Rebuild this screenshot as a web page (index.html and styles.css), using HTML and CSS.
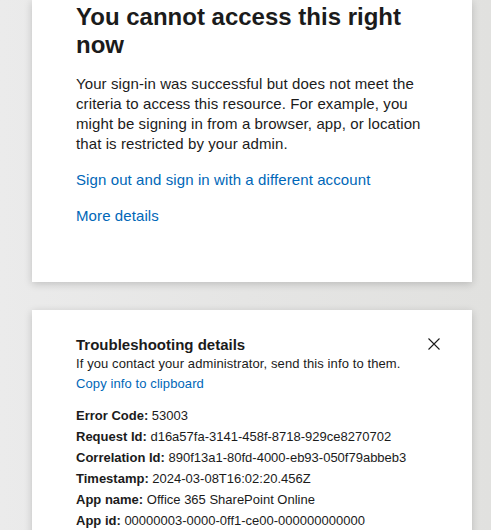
FILE: index.html
```html
<!DOCTYPE html>
<html lang="en">
<head>
<meta charset="utf-8">
<title>You cannot access this right now</title>
<link rel="stylesheet" href="styles.css">
</head>
<body>
<main class="page">
  <section class="card card-main">
    <h1 class="title">You cannot access this right now</h1>
    <p class="desc">Your sign-in was successful but does not meet the criteria to access this resource. For example, you might be signing in from a browser, app, or location that is restricted by your admin.</p>
    <a class="link link-signout" href="#">Sign out and sign in with a different account</a>
    <a class="link link-more" href="#">More details</a>
  </section>
  <section class="card card-details">
    <div class="details-head">
      <h2 class="details-title">Troubleshooting details</h2>
      <button class="close" aria-label="Close">
        <svg width="12" height="12" viewBox="0 0 12 12"><path d="M0.5 0.5 L11.5 11.5 M11.5 0.5 L0.5 11.5" stroke="#1b1b1b" stroke-width="1.1" fill="none"/></svg>
      </button>
    </div>
    <p class="details-sub">If you contact your administrator, send this info to them.</p>
    <a class="link link-copy" href="#">Copy info to clipboard</a>
    <dl class="info">
      <div class="row"><dt>Error Code:</dt> <dd>53003</dd></div>
      <div class="row"><dt>Request Id:</dt> <dd>d16a57fa-3141-458f-8718-929ce8270702</dd></div>
      <div class="row"><dt>Correlation Id:</dt> <dd>890f13a1-80fd-4000-eb93-050f79abbeb3</dd></div>
      <div class="row"><dt>Timestamp:</dt> <dd>2024-03-08T16:02:20.456Z</dd></div>
      <div class="row"><dt>App name:</dt> <dd>Office 365 SharePoint Online</dd></div>
      <div class="row"><dt>App id:</dt> <dd>00000003-0000-0ff1-ce00-000000000000</dd></div>
    </dl>
  </section>
</main>
</body>
</html>
```

FILE: styles.css
```css
html, body {
  margin: 0;
  padding: 0;
}
body {
  background: linear-gradient(90deg, #ebebeb 0%, #e5e5e4 50%, #e1e1df 100%);
  font-family: "Liberation Sans", Arial, sans-serif;
  color: #1b1b1b;
  height: 530px;
  overflow: hidden;
}
.page {
  display: flex;
  flex-direction: column;
  gap: 28px;
  padding-left: 32px;
}
.card {
  width: 440px;
  box-sizing: border-box;
  background: #fff;
  padding-left: 44px;
  padding-right: 44px;
  box-shadow: 0 2px 8px rgba(0,0,0,0.18);
}
.card-main {
  padding-top: 3px;
  height: 282px;
  display: flex;
  flex-direction: column;
  align-items: flex-start;
}
.title {
  margin: 0;
  font-size: 24px;
  line-height: 28px;
  font-weight: 700;
}
.desc {
  margin: 15px 0 0;
  font-size: 15px;
  line-height: 20px;
  letter-spacing: 0.1px;
}
.link {
  color: #0067b8;
  text-decoration: none;
  font-size: 15px;
  line-height: 20px;
  letter-spacing: 0.1px;
}
.link-signout { margin-top: 16px; }
.link-more { margin-top: 16px; }
.card-details {
  padding-top: 25px;
  height: 240px;
  display: flex;
  flex-direction: column;
  align-items: flex-start;
}
.details-head {
  display: flex;
  align-items: center;
  justify-content: space-between;
  width: 100%;
}
.details-title {
  margin: 0;
  font-size: 15px;
  line-height: 20px;
  font-weight: 700;
}
.close {
  border: 0;
  background: none;
  padding: 0;
  width: 12px;
  height: 12px;
  display: flex;
  margin-right: -12px;
  margin-top: -3px;
}
.details-sub {
  margin: 0;
  font-size: 13px;
  line-height: 18px;
  letter-spacing: 0.1px;
}
.link-copy {
  font-size: 13px;
  line-height: 20px;
  margin-top: 1px;
}
.info {
  margin: 11px 0 0;
  font-size: 13px;
  line-height: 21px;
}
.row dt {
  display: inline;
  font-weight: 700;
}
.row dd {
  display: inline;
  margin: 0;
}
```
